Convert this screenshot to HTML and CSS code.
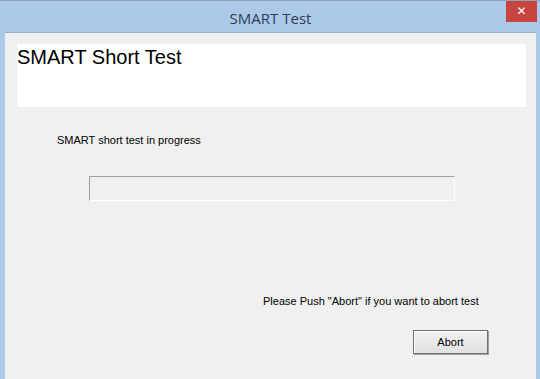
FILE: index.html
```html
<!DOCTYPE html>
<html lang="en">
<head>
  <meta charset="UTF-8" />
  <title>SMART Test</title>
  <link rel="stylesheet" href="styles.css">
</head>
<body>
  <div class="window">
    <div class="titlebar">
      <span class="title">SMART Test</span>
      <button class="close">&#x2715;</button>
    </div>
    <div class="client">
      <div class="header">
        <h1>SMART Short Test</h1>
      </div>
      <p class="status">SMART short test in progress</p>
      <div class="progress"></div>
      <p class="hint">Please Push "Abort" if you want to abort test</p>
      <div class="actions">
        <button class="btn">Abort</button>
      </div>
    </div>
  </div>
</body>
</html>
```

FILE: styles.css
```css
html, body {
  margin: 0;
  padding: 0;
}

body {
  width: 540px;
  height: 379px;
  overflow: hidden;
  font-family: "Liberation Sans", Arial, sans-serif;
}

.window {
  width: 540px;
  height: 379px;
  box-sizing: border-box;
  background: #adc9e9;
  border-top: 1px solid #8ea4be;
  padding: 0 4px 0 5px;
  display: flex;
  flex-direction: column;
}

.titlebar {
  height: 31px;
  position: relative;
  display: flex;
  align-items: center;
  justify-content: center;
}

.title {
  font-family: "Open Sans", "Noto Sans", sans-serif;
  font-size: 15px;
  color: #2d3e52;
  margin-top: 2px;
}

.close {
  position: absolute;
  top: 0;
  right: -1px;
  width: 31px;
  height: 21px;
  border: none;
  background: #c7453f;
  color: #fff;
  font-size: 12px;
  line-height: 21px;
  padding: 0;
  font-family: "DejaVu Sans", sans-serif;
}

.client {
  flex: 1;
  background: #f0f0f0;
  border-top: 1px solid #97aec8;
  padding: 11px 0 0 12px;
  display: flex;
  flex-direction: column;
}

.header {
  background: #fff;
  width: 509px;
  height: 63px;
}

.header h1 {
  margin: 0;
  padding-top: 1px;
  font-size: 20px;
  font-weight: normal;
  color: #000;
  line-height: 24px;
}

.status {
  margin: 27px 0 0 40px;
  font-size: 11px;
  color: #000;
}

.progress {
  margin: 30px 0 0 72px;
  width: 364px;
  height: 23px;
  border: 1px solid #fff;
  border-top-color: #a0a0a0;
  border-left-color: #a0a0a0;
  background: #f0f0f0;
}

.hint {
  margin: 94px 0 0 246px;
  font-size: 11px;
  color: #000;
}

.actions {
  margin: 23px 0 0 396px;
}

.btn {
  width: 75px;
  height: 24px;
  font-family: "Liberation Sans", Arial, sans-serif;
  font-size: 11px;
  color: #000;
  background: linear-gradient(#f2f2f2, #e0e0e0);
  border: 1px solid #707070;
  box-shadow: inset 1px 1px 0 #fff, 1px 1px 0 #a0a0a0;
  padding: 0;
}
```
